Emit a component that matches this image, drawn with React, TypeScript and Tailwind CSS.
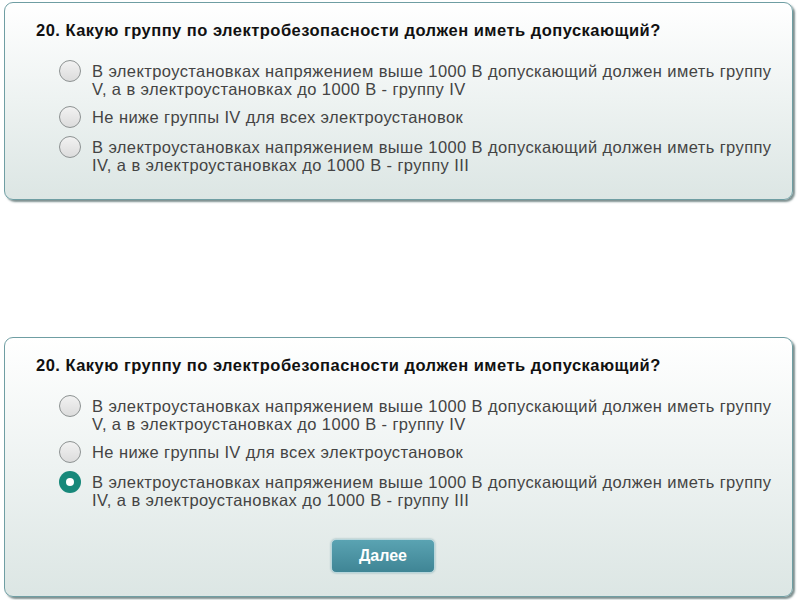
import React from "react";

const options = [
  [
    "В электроустановках напряжением выше 1000 В допускающий должен иметь группу",
    "V, а в электроустановках до 1000 В - группу IV",
  ],
  ["Не ниже группы IV для всех электроустановок"],
  [
    "В электроустановках напряжением выше 1000 В допускающий должен иметь группу",
    "IV, а в электроустановках до 1000 В - группу III",
  ],
];

function Radio({ checked }: { checked?: boolean }) {
  if (checked) {
    return (
      <div className="w-[22px] h-[22px] rounded-full bg-[#17887a] flex items-center justify-center shrink-0">
        <div className="w-[8px] h-[8px] rounded-full bg-white" />
      </div>
    );
  }
  return (
    <div className="w-[22px] h-[22px] rounded-full border border-[#8d9292] bg-gradient-to-b from-[#f2f2f2] to-[#dcdcdc] shrink-0" />
  );
}

function Card({ selected, button }: { selected?: number; button?: boolean }) {
  return (
    <div className="mx-[4px] w-[789px] rounded-[9px] border border-[#6f9ea3] bg-gradient-to-b from-white to-[#dce6e4] shadow-[2px_2px_2px_rgba(40,70,70,0.6)] pl-[31px] pt-[17px]">
      <div className="text-[16.5px] leading-[20px] font-bold text-[#111] tracking-[0.48px]">
        20. Какую группу по электробезопасности должен иметь допускающий?
      </div>
      <div className="ml-[23px] mt-[22px] flex flex-col gap-[10px]">
        {options.map((lines, i) => (
          <div key={i} className="flex items-start gap-[11px]">
            <div className="mt-[-2px]">
              <Radio checked={selected === i} />
            </div>
            <div className="text-[16.5px] leading-[18px] text-[#444] tracking-[0.4px]">
              {lines.map((l, j) => (
                <div key={j} className="whitespace-nowrap">{l}</div>
              ))}
            </div>
          </div>
        ))}
      </div>
      {button ? (
        <div className="ml-[295px] mt-[30px] mb-[23px]">
          <div className="w-[104px] h-[34px] rounded-[5px] bg-gradient-to-b from-[#5aa3b2] to-[#3f8595] border border-[#b7d6dc] shadow-[0_0_2px_rgba(60,120,130,0.6)] flex items-center justify-center text-white font-bold text-[16px]">
            Далее
          </div>
        </div>
      ) : (
        <div className="h-[25px]" />
      )}
    </div>
  );
}

export default function App() {
  return (
    <div
      className="w-[800px] h-[600px] bg-white pt-[2px]"
      style={{ fontFamily: '"Liberation Sans", Arial, sans-serif' }}
    >
      <Card />
      <div className="h-[137px]" />
      <Card selected={2} button />
    </div>
  );
}
